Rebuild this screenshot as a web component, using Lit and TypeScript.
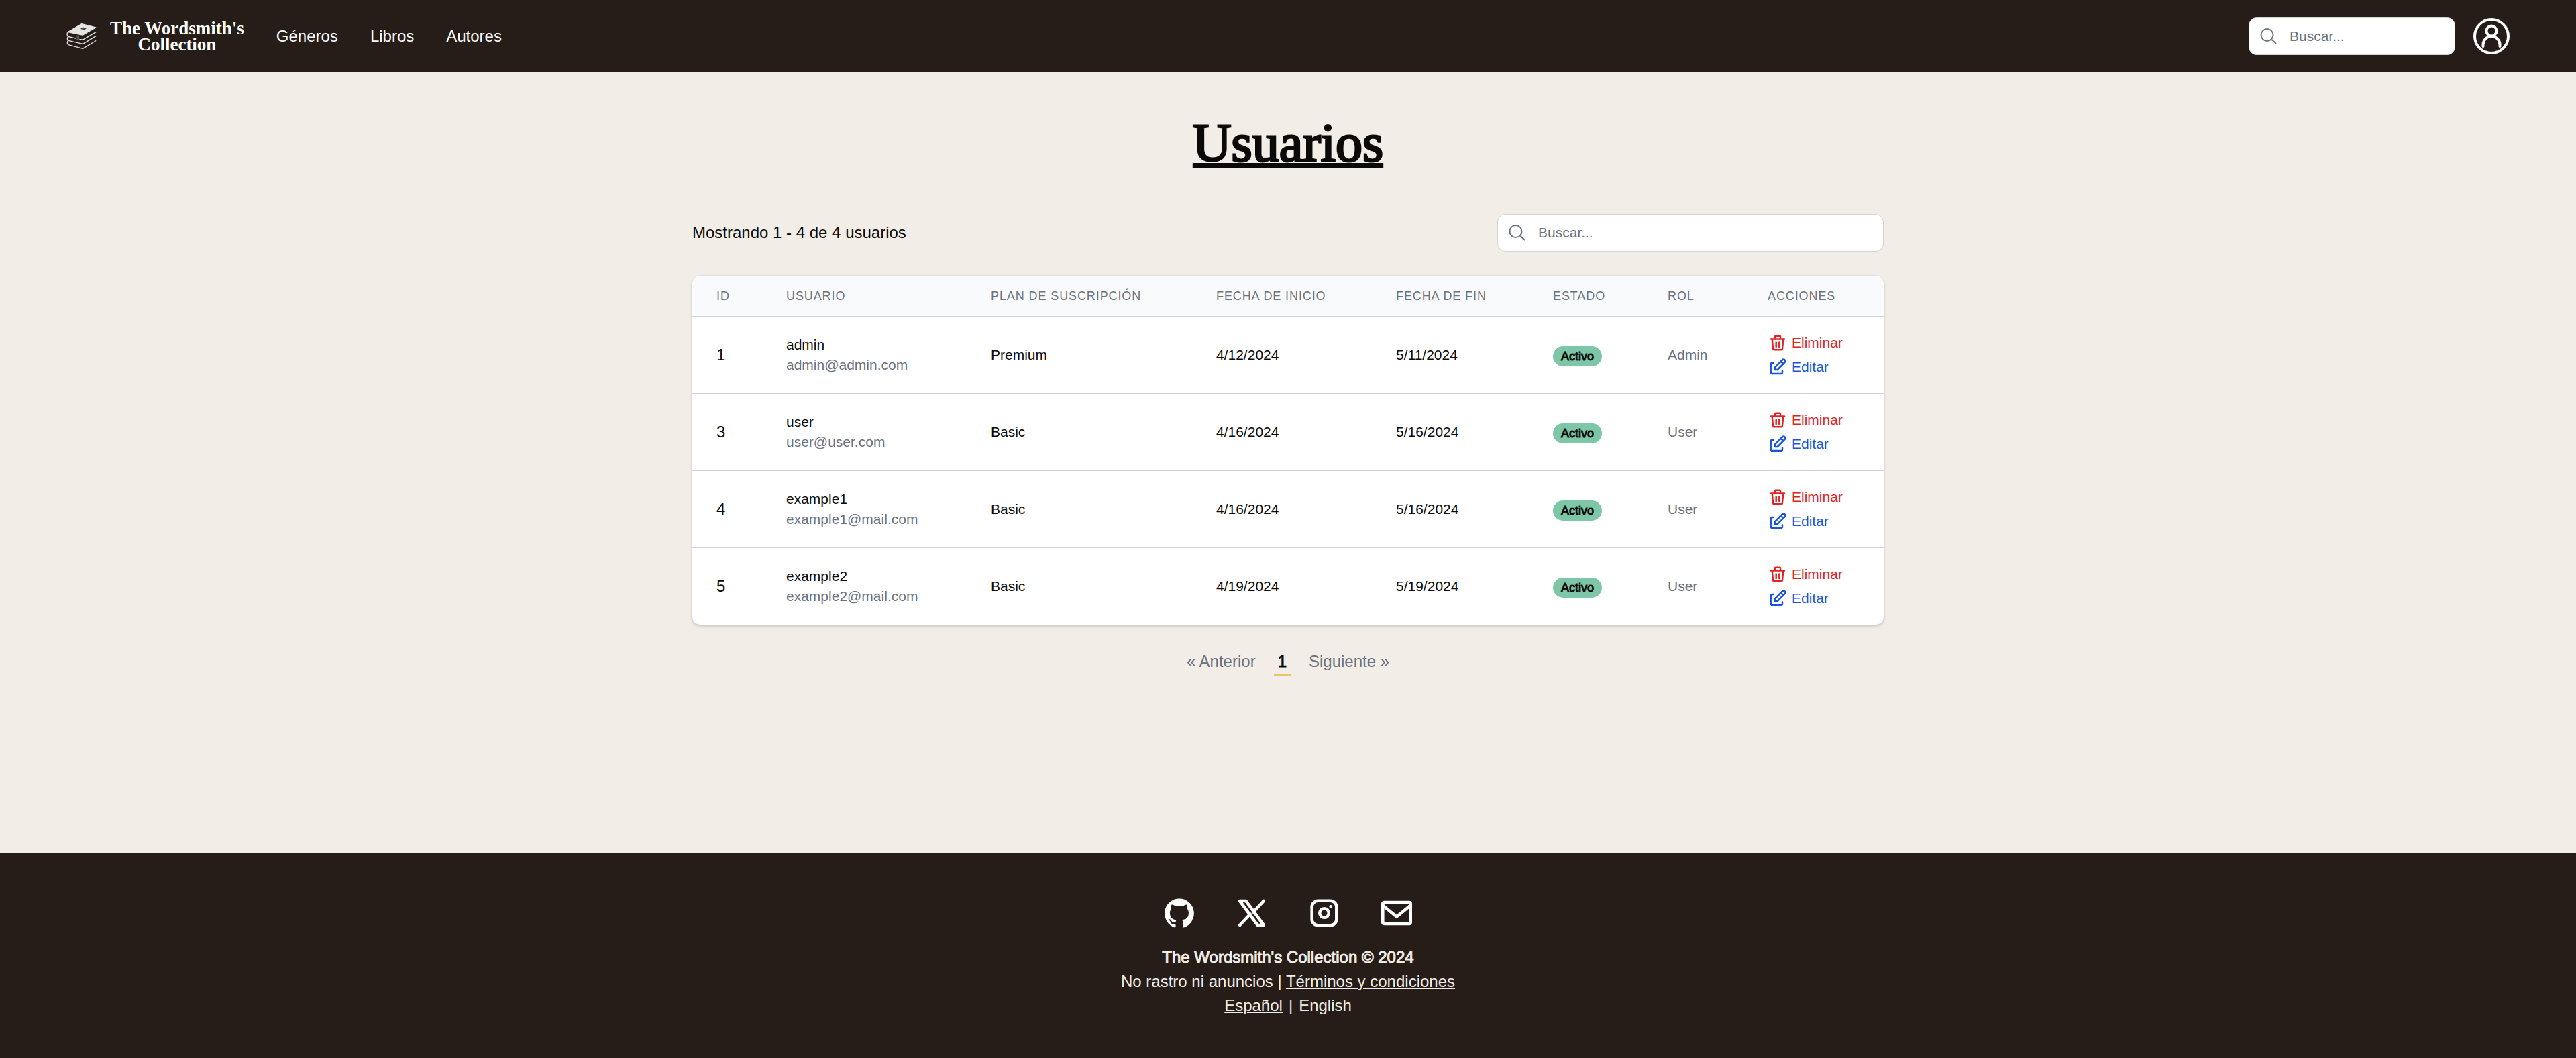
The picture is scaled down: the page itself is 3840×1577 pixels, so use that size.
import { LitElement, html, css, svg } from "lit";
import { customElement } from "lit/decorators.js";

interface User {
  id: number;
  name: string;
  email: string;
  plan: string;
  start: string;
  end: string;
  role: string;
}

const USERS: User[] = [
  { id: 1, name: "admin", email: "admin@admin.com", plan: "Premium", start: "4/12/2024", end: "5/11/2024", role: "Admin" },
  { id: 3, name: "user", email: "user@user.com", plan: "Basic", start: "4/16/2024", end: "5/16/2024", role: "User" },
  { id: 4, name: "example1", email: "example1@mail.com", plan: "Basic", start: "4/16/2024", end: "5/16/2024", role: "User" },
  { id: 5, name: "example2", email: "example2@mail.com", plan: "Basic", start: "4/19/2024", end: "5/19/2024", role: "User" },
];

const COLUMNS = ["ID", "Usuario", "Plan de suscripción", "Fecha de inicio", "Fecha de fin", "Estado", "Rol", "Acciones"];

const stroke = (body: unknown, cls: string) => html`
  <svg class=${cls} viewBox="0 0 24 24" fill="none" stroke="currentColor" stroke-width="2.5"
    stroke-linecap="round" stroke-linejoin="round" aria-hidden="true">${body}</svg>`;

const searchIcon = html`
  <svg class="search-icon" viewBox="0 0 26 26" fill="none" stroke="currentColor" stroke-width="2" aria-hidden="true">
    <circle cx="10.500" cy="11" r="9"></circle>
    <path d="M17.500 18l6.500 6"></path>
  </svg>`;

const trashIcon = stroke(svg`
  <path d="M2 6.500h20M3.700 6.500l1.300 14a1.800 1.800 0 0 0 1.800 1.700h10.400a1.800 1.800 0 0 0 1.800-1.700l1.300-14M8 6V2.800a1 1 0 0 1 1-1h6a1 1 0 0 1 1 1V6M9.700 11.500v6.500M14.300 11.500v6.500"></path>`, "action-icon");

const editIcon = stroke(svg`
  <path d="M6 6H3.500A1.800 1.800 0 0 0 1.700 7.800v12.400A1.800 1.800 0 0 0 3.500 22h13.700a1.800 1.800 0 0 0 1.800-1.800V17.500"></path>
  <path d="M8 12.300V16h3.700L22.500 5.200A2.600 2.600 0 0 0 18.800 1.500z"></path>
  <path d="M17.200 4l2.800 2.800"></path>`, "action-icon");

const githubIcon = html`
  <svg class="social-icon" viewBox="0 0 24 24" fill="currentColor" aria-hidden="true">
    <path d="M12 .3a12 12 0 0 0-3.800 23.380c.6.120.830-.26.830-.57L9 21.070c-3.340.72-4.040-1.610-4.040-1.610-.55-1.390-1.340-1.760-1.340-1.760-1.080-.74.090-.73.090-.73 1.200.09 1.830 1.240 1.830 1.240 1.080 1.830 2.810 1.300 3.500 1 .1-.78.420-1.310.760-1.610-2.670-.3-5.470-1.330-5.470-5.930 0-1.310.470-2.380 1.240-3.220-.14-.3-.54-1.520.1-3.180 0 0 1-.32 3.300 1.230a11.500 11.500 0 0 1 6 0c2.280-1.550 3.290-1.230 3.290-1.230.64 1.660.240 2.880.120 3.180a4.650 4.650 0 0 1 1.230 3.220c0 4.610-2.800 5.630-5.480 5.920.42.360.810 1.100.810 2.220l-.01 3.290c0 .31.200.69.820.57A12 12 0 0 0 12 .3"></path>
  </svg>`;

const xIcon = stroke(svg`<path d="M2.300 2.200h5L21.700 21.800h-5z"></path><path d="M21.700 2.200l-8.400 9M10.700 12.800l-8.400 9"></path>`, "social-icon");
const instagramIcon = stroke(svg`
  <rect x="2" y="2" width="20" height="20" rx="5"></rect><circle cx="12" cy="12" r="3.700"></circle>
  <circle cx="17.300" cy="6.700" r="1.200" fill="currentColor" stroke="none"></circle>`, "social-icon");
const mailIcon = stroke(svg`<rect x="0.700" y="3.300" width="22.600" height="17.400" rx="1"></rect><path d="M1 6l11 9L23 6"></path>`, "social-icon");

const userIcon = html`
  <svg class="user-icon" viewBox="0 0 54 54" fill="none" stroke="currentColor" stroke-width="4" stroke-linecap="round" aria-hidden="true">
    <circle cx="27" cy="27" r="25"></circle>
    <circle cx="27" cy="19" r="7.500"></circle>
    <path d="M14.500 42V39.500a12.500 12.500 0 0 1 25 0V42"></path>
  </svg>`;

const booksIcon = html`
  <svg class="books-icon" viewBox="12 13 134 115" fill="none" stroke="#e4e4e4" stroke-width="4" stroke-linecap="round" stroke-linejoin="round" aria-hidden="true">
    <path d="M80 15l63 16-59 34-66-14z" fill="#e4e4e4"></path>
    <path d="M74 37l10-7 18 4-10 8z" fill="#4a4541" stroke="none"></path>
    <path d="M18 51c-6 6-5 18 2 21l34 8M71 84l14 2 58-34M18 73c-5 5-4 15 2 17l65 15 58-35M18 91c-5 5-4 16 2 18l65 17 58-35"></path>
    <path d="M57 65l12 2v22l-6-4-6 3z" fill="#55504c" stroke="none"></path>
  </svg>`;

@customElement("app-root")
export class AppRoot extends LitElement {
  static styles = css`
    :host {
      display: flex;
      flex-direction: column;
      min-height: 100vh;
      background: #f2ede6;
      color: #0c0a09;
      font: 24px/36px "Liberation Sans", Arial, sans-serif;
    }
    * { box-sizing: border-box; }
    a { color: inherit; text-decoration: none; }
    svg { display: block; flex: none; overflow: visible; }
    button { font: inherit; background: none; border: 0; padding: 0; cursor: pointer; }
    .header {
      display: flex;
      align-items: center;
      height: 108px;
      padding: 0 99px;
      background: #261d18;
      color: #fff;
    }
    .brand { display: flex; align-items: center; gap: 20px; }
    .books-icon { width: 45px; height: 38px; }
    .wordmark {
      font: bold 27px/24px "Liberation Serif", "Times New Roman", serif;
      text-align: center;
    }
    .line { display: block; }
    .nav { display: flex; gap: 48px; margin-left: 48px; }
    .tools { display: flex; align-items: center; gap: 27px; margin-left: auto; }
    .search {
      display: flex;
      align-items: center;
      gap: 18px;
      width: 308px;
      height: 56px;
      padding: 0 16px;
      border: 1px solid #d4d4d4;
      border-radius: 12px;
      background: #fff;
      color: #6b7280;
    }
    .search.wide { width: 576px; }
    .search-icon { width: 26px; height: 26px; }
    .search-input {
      flex: 1;
      min-width: 0;
      border: 0;
      outline: 0;
      padding: 0;
      background: none;
      color: inherit;
      font: 21px/30px "Liberation Sans", Arial, sans-serif;
    }
    .search-input::placeholder { color: #6b7280; opacity: 1; }
    .user-icon { width: 54px; height: 54px; }
    .profile { color: #fff; }
    .main { flex: 1; width: 100%; max-width: 1776px; margin: 0 auto; padding: 60px 0; }
    .title {
      margin: 0;
      text-align: center;
      font: 80px/90px "Liberation Serif", "Times New Roman", serif;
      -webkit-text-stroke: 3px currentColor;
      text-decoration: underline;
      text-decoration-thickness: 7px;
      text-decoration-skip-ink: none;
      text-underline-offset: 3px;
    }
    .toolbar { display: flex; align-items: center; justify-content: space-between; margin-top: 61px; }
    .card {
      margin-top: 36px;
      border-radius: 12px;
      overflow: hidden;
      background: #fff;
      box-shadow: 0 2px 5px rgba(0, 0, 0, 0.2);
    }
    .table { width: 100%; border-collapse: collapse; text-align: left; table-layout: fixed; }
    .table th {
      height: 60px;
      padding: 0 0 0 36px;
      background: #f9fafb;
      color: #6b7280;
      font-size: 18px;
      font-weight: 400;
      line-height: 24px;
      letter-spacing: 0.05em;
      text-transform: uppercase;
    }
    .table td { height: 115px; padding: 0 0 0 36px; border-top: 1px solid #d4d4d4; font-size: 21px; line-height: 30px; }
    .table .id { font-size: 24px; }
    .c0 { width: 104px; } .c1 { width: 305px; } .c2 { width: 336px; } .c3 { width: 268px; }
    .c4 { width: 234px; } .c5 { width: 171px; } .c6 { width: 149px; }
    .email, .table .role { color: #6b7280; }
    .email { display: block; }
    .state { display: flex; padding-top: 5px; }
    .badge {
      padding: 0 12px;
      border-radius: 15px;
      background: #7dc6a7;
      font-size: 18px;
      line-height: 30px;
      -webkit-text-stroke: 1px currentColor;
    }
    .actions { display: flex; flex-direction: column; align-items: flex-start; }
    .action { display: flex; align-items: center; gap: 9px; height: 36px; padding-left: 3px; }
    .delete { color: #e02424; }
    .edit { color: #1a56db; }
    .action-icon { width: 24px; height: 24px; }
    .pager { display: flex; justify-content: center; gap: 27px; margin-top: 37px; color: #6b7280; }
    .page { padding: 0 6px; border-bottom: 3px solid #e9c46a; color: #0c0a09; -webkit-text-stroke: 1px currentColor; }
    .footer {
      display: flex;
      flex-direction: column;
      align-items: center;
      padding: 66px 0 60px;
      background: #261d18;
      color: #f2ede6;
    }
    .social { display: flex; gap: 60px; margin-bottom: 24px; color: #fff; }
    .social-icon { width: 48px; height: 48px; padding: 2px; }
    .footer p { margin: 0; }
    .footer .copy { -webkit-text-stroke: 1px currentColor; }
    .linked { text-decoration: underline; text-decoration-thickness: 2px; }
    .langs { display: flex; gap: 9px; }
  `;

  private search(id: string, wide: boolean) {
    return html`
      <label class="search ${wide ? "wide" : ""}" for=${id}>
        ${searchIcon}
        <input class="search-input" id=${id} type="search" placeholder="Buscar..." aria-label="Buscar" />
      </label>`;
  }

  private row(u: User) {
    return html`
      <tr>
        <td class="id">${u.id}</td>
        <td>${u.name}<span class="email">${u.email}</span></td>
        <td>${u.plan}</td>
        <td>${u.start}</td>
        <td>${u.end}</td>
        <td><div class="state"><span class="badge">Activo</span></div></td>
        <td class="role">${u.role}</td>
        <td>
          <div class="actions">
            <button class="action delete">${trashIcon}Eliminar</button>
            <button class="action edit">${editIcon}Editar</button>
          </div>
        </td>
      </tr>`;
  }

  render() {
    return html`
      <header class="header">
        <a class="brand" href="#">
          ${booksIcon}
          <span class="wordmark"><span class="line">The Wordsmith's</span><span class="line">Collection</span></span>
        </a>
        <nav class="nav"><a href="#">Géneros</a><a href="#">Libros</a><a href="#">Autores</a></nav>
        <div class="tools">
          ${this.search("site-search", false)}
          <button class="profile" aria-label="Perfil">${userIcon}</button>
        </div>
      </header>
      <main class="main">
        <h1 class="title">Usuarios</h1>
        <div class="toolbar">
          <span>Mostrando 1 - 4 de 4 usuarios</span>
          ${this.search("user-search", true)}
        </div>
        <div class="card">
          <table class="table">
            <thead><tr>${COLUMNS.map((c, i) => html`<th class="c${i}" scope="col">${c}</th>`)}</tr></thead>
            <tbody>${USERS.map((u) => this.row(u))}</tbody>
          </table>
        </div>
        <nav class="pager" aria-label="Paginación">
          <a href="#">« Anterior</a><a class="page" href="#" aria-current="page">1</a><a href="#">Siguiente »</a>
        </nav>
      </main>
      <footer class="footer">
        <div class="social">
          <a href="#" aria-label="GitHub">${githubIcon}</a>
          <a href="#" aria-label="X">${xIcon}</a>
          <a href="#" aria-label="Instagram">${instagramIcon}</a>
          <a href="#" aria-label="Correo">${mailIcon}</a>
        </div>
        <p class="copy">The Wordsmith's Collection © 2024</p>
        <p>No rastro ni anuncios | <a class="linked" href="#">Términos y condiciones</a></p>
        <p class="langs"><a class="linked" href="#">Español</a><span>|</span><a href="#">English</a></p>
      </footer>`;
  }
}
